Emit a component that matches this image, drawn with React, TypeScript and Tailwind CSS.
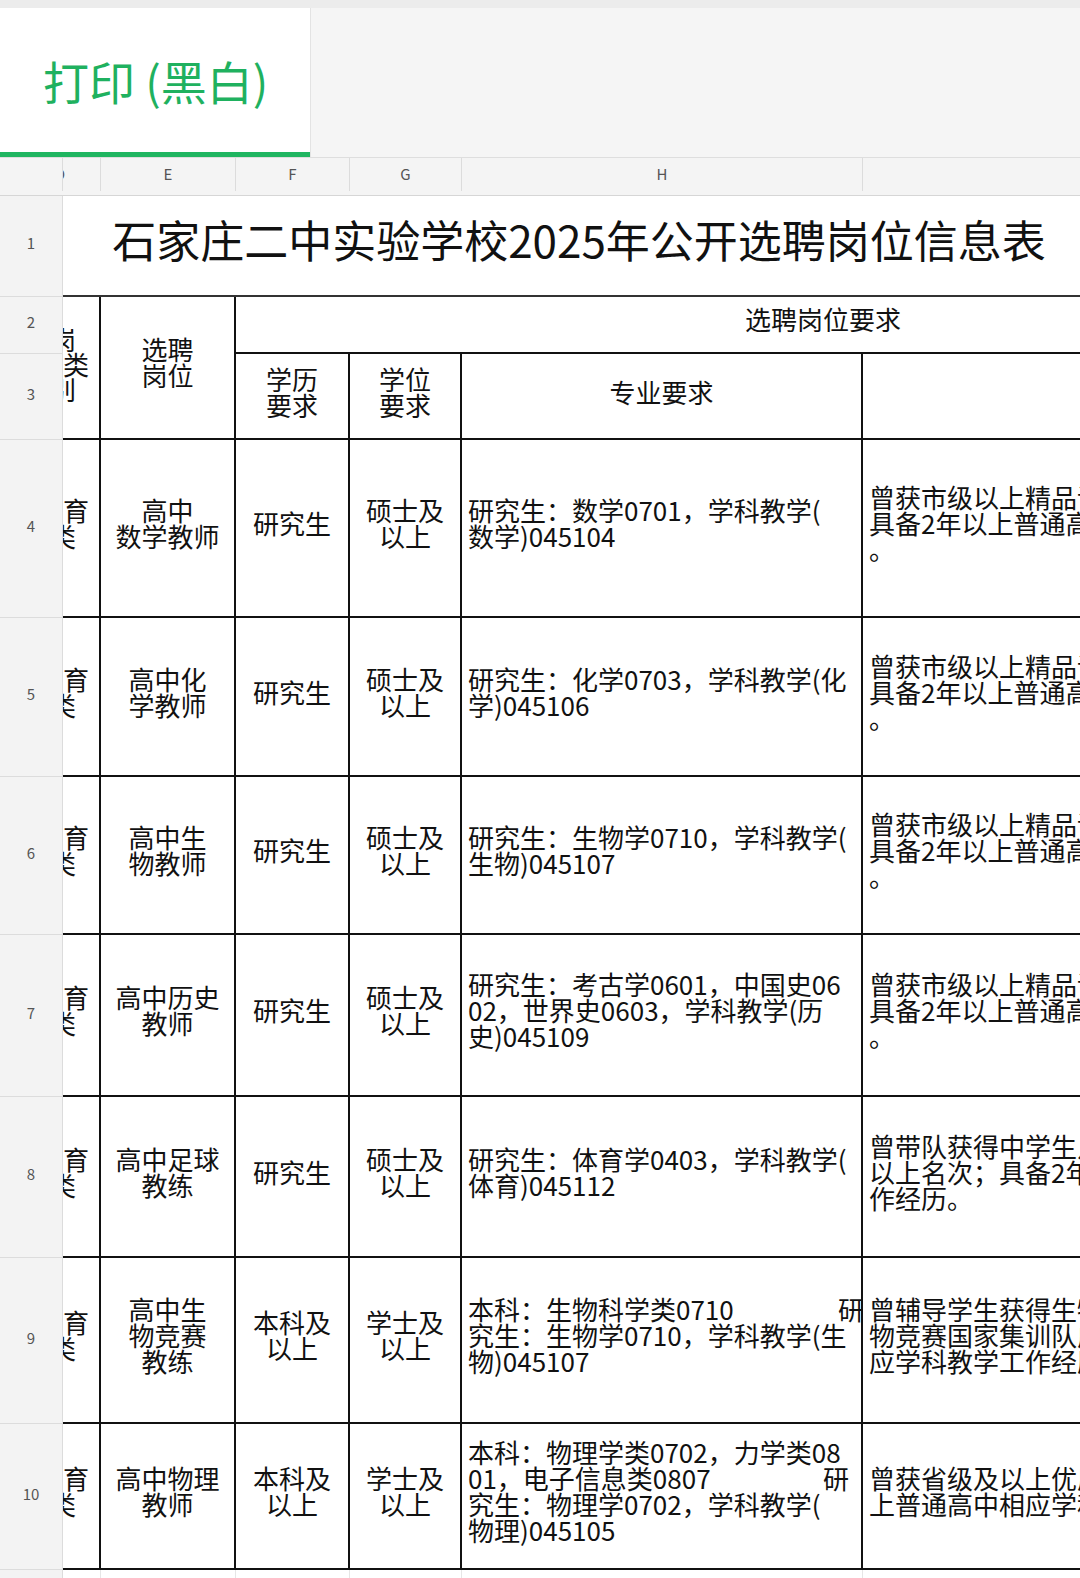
const font = "font-['Noto_Sans_CJK_SC','Noto_Sans',sans-serif]";

type Row = {
  n: number;
  e: string[];
  f: string[];
  g: string[];
  h: React.ReactNode[];
  i: string[];
};

const rows: Row[] = [
  {
    n: 4,
    e: ["高中", "数学教师"],
    f: ["研究生"],
    g: ["硕士及", "以上"],
    h: ["研究生：数学0701，学科教学(", "数学)045104"],
    i: ["曾获市级以上精品课程奖励；", "具备2年以上普通高中相应学科", "。"],
  },
  {
    n: 5,
    e: ["高中化", "学教师"],
    f: ["研究生"],
    g: ["硕士及", "以上"],
    h: ["研究生：化学0703，学科教学(化", "学)045106"],
    i: ["曾获市级以上精品课程奖励；", "具备2年以上普通高中相应学科", "。"],
  },
  {
    n: 6,
    e: ["高中生", "物教师"],
    f: ["研究生"],
    g: ["硕士及", "以上"],
    h: ["研究生：生物学0710，学科教学(", "生物)045107"],
    i: ["曾获市级以上精品课程奖励；", "具备2年以上普通高中相应学科", "。"],
  },
  {
    n: 7,
    e: ["高中历史", "教师"],
    f: ["研究生"],
    g: ["硕士及", "以上"],
    h: ["研究生：考古学0601，中国史06", "02，世界史0603，学科教学(历", "史)045109"],
    i: ["曾获市级以上精品课程奖励；", "具备2年以上普通高中相应学科", "。"],
  },
  {
    n: 8,
    e: ["高中足球", "教练"],
    f: ["研究生"],
    g: ["硕士及", "以上"],
    h: ["研究生：体育学0403，学科教学(", "体育)045112"],
    i: ["曾带队获得中学生足球比赛", "以上名次；具备2年以上相应工", "作经历。"],
  },
  {
    n: 9,
    e: ["高中生", "物竞赛", "教练"],
    f: ["本科及", "以上"],
    g: ["学士及", "以上"],
    h: [
      <div key="a" className="flex w-[396px] justify-between">
        <span>本科：生物科学类0710</span>
        <span>研</span>
      </div>,
      "究生：生物学0710，学科教学(生",
      "物)045107",
    ],
    i: ["曾辅导学生获得生物学奥林匹克", "物竞赛国家集训队成员；具备相", "应学科教学工作经历。"],
  },
  {
    n: 10,
    e: ["高中物理", "教师"],
    f: ["本科及", "以上"],
    g: ["学士及", "以上"],
    h: [
      "本科：物理学类0702，力学类08",
      <div key="b" className="flex w-[381px] justify-between">
        <span>01，电子信息类0807</span>
        <span>研</span>
      </div>,
      "究生：物理学0702，学科教学(",
      "物理)045105",
    ],
    i: ["曾获省级及以上优质课奖励；具备", "上普通高中相应学科教学工作经历"],
  },
];

const rowHead =
  "flex items-center justify-center border-r border-b border-[#dcdcdc] bg-[#f3f3f3] pb-[6px] text-[15px] text-[#555]";
const cell = "flex items-center border-r-2 border-b-2 border-[#111] overflow-hidden";

function Lines({ lines }: { lines: React.ReactNode[] }) {
  return (
    <div className="whitespace-nowrap">
      {lines.map((l, k) => (
        <div key={k}>{l}</div>
      ))}
    </div>
  );
}

export default function App() {
  return (
    <div className={`w-[1080px] h-[1578px] overflow-hidden bg-white ${font} text-[#111]`}>
      <div className="h-[8px] bg-[#ececec]" />
      <div className="flex h-[150px] border-b border-[#dedede] bg-[#f5f5f5]">
        <div className="flex w-[311px] flex-col border-r border-[#e3e3e3] bg-white">
          <div className="flex flex-1 items-center pl-[43px] text-[46px] leading-none text-[#1fb15f]">
            打印 (黑白)
          </div>
          <div className="h-[5px] bg-[#1fb560]" />
        </div>
      </div>

      <div className="flex h-[38px] border-b border-[#d6d6d6] bg-[#f4f4f4] pb-[4px] text-[15px] text-[#555]">
        <div className="w-[63px] shrink-0 border-r border-[#dcdcdc]" />
        <div className="flex w-[38px] shrink-0 items-center overflow-hidden border-r border-[#dcdcdc]">
          <div className="-ml-[41px] w-[76px] shrink-0 text-center">D</div>
        </div>
        <div className="flex w-[135px] shrink-0 items-center justify-center border-r border-[#dcdcdc]">E</div>
        <div className="flex w-[114px] shrink-0 items-center justify-center border-r border-[#dcdcdc]">F</div>
        <div className="flex w-[112px] shrink-0 items-center justify-center border-r border-[#dcdcdc]">G</div>
        <div className="flex w-[401px] shrink-0 items-center justify-center border-r border-[#dcdcdc]">H</div>
        <div className="w-[232px] shrink-0" />
      </div>

      <div className="grid grid-cols-[63px_38px_135px_114px_112px_401px_232px] grid-rows-[101px_57px_86px_178px_159px_158px_162px_161px_166px_146px_40px] text-[26px] leading-[26px]">
        {/* row 1 */}
        <div className={rowHead}>1</div>
        <div className="col-span-6 flex items-center justify-center border-b-2 border-[#333] pb-[14px] text-[44px] leading-none whitespace-nowrap">
          石家庄二中实验学校2025年公开选聘岗位信息表
        </div>

        {/* rows 2-3 */}
        <div className={rowHead}>2</div>
        <div className={`${cell} row-span-2 pb-[8px]`}>
          <div className="-ml-[38px] w-[76px] shrink-0 text-center leading-[25px]">
            岗<br />位类<br />别
          </div>
        </div>
        <div className={`${cell} row-span-2 justify-center pb-[12px] text-center`}>
          <Lines lines={["选聘", "岗位"]} />
        </div>
        <div className={`${cell} col-span-4 pb-[12px] pl-[509px]`}>
          <span className="whitespace-nowrap">选聘岗位要求</span>
        </div>
        <div className={rowHead}>3</div>
        <div className={`${cell} justify-center pb-[8px] text-center`}>
          <Lines lines={["学历", "要求"]} />
        </div>
        <div className={`${cell} justify-center pb-[8px] text-center`}>
          <Lines lines={["学位", "要求"]} />
        </div>
        <div className={`${cell} justify-center pb-[8px]`}>专业要求</div>
        <div className={cell} />

        {rows.map((r) => (
          <div key={r.n} className="contents">
            <div className={rowHead}>{r.n}</div>
            <div className={`${cell} pb-[10px]`}>
              <div className="-ml-[38px] w-[76px] shrink-0 text-center">
                教育<br />类
              </div>
            </div>
            <div className={`${cell} justify-center pb-[10px] text-center`}>
              <Lines lines={r.e} />
            </div>
            <div className={`${cell} justify-center pb-[10px] text-center`}>
              <Lines lines={r.f} />
            </div>
            <div className={`${cell} justify-center pb-[10px] text-center`}>
              <Lines lines={r.g} />
            </div>
            <div className={`${cell} pb-[10px] pl-[6px]`}>
              <Lines lines={r.h} />
            </div>
            <div className={`${cell} pb-[10px] pl-[6px]`}>
              <Lines lines={r.i} />
            </div>
          </div>
        ))}

        {/* row 11 */}
        <div className={rowHead}>11</div>
        <div className="border-r border-[#e6e6e6]" />
        <div className="border-r border-[#e6e6e6]" />
        <div className="border-r border-[#e6e6e6]" />
        <div className="border-r border-[#e6e6e6]" />
        <div className="border-r border-[#e6e6e6]" />
        <div />
      </div>
    </div>
  );
}
